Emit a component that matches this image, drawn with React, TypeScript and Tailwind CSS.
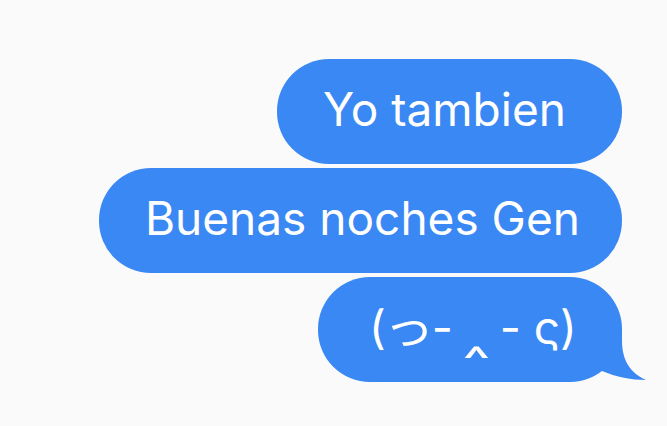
import React from "react";

type Msg = { text: React.ReactNode; id: string; width: string; pad: string; tail?: boolean };

const Kaomoji = () => (
  <>
    (<span className="inline-block scale-x-110">っ</span>-{" "}
    <span className="inline-block origin-[50%_83%] scale-x-[1.4] scale-y-[1.15]">‸</span> - ς)
  </>
);

const messages: Msg[] = [
  { id: "a", text: "Yo tambien", width: "w-[345px]", pad: "pl-[46px]" },
  { id: "b", text: "Buenas noches Gen", width: "w-[523px]", pad: "pl-[46px]" },
  { id: "c", text: <Kaomoji />, width: "w-[304px]", pad: "pl-[51px]", tail: true },
];

function Tail() {
  return (
    <svg
      className="absolute right-[-24px] bottom-0 w-[54px] h-[55px]"
      viewBox="0 0 54 55"
      aria-hidden="true"
    >
      <path d="M10 0 L30 0 L30 13 C30 28 34 44 54 53 C40 53 24 50 10 44 Z" fill="#3a88f4" />
    </svg>
  );
}

export default function App() {
  return (
    <div
      className="w-[667px] h-[426px] bg-[#fafafa] overflow-hidden"
      style={{ fontFamily: "Inter, 'Noto Sans', 'Noto Sans CJK JP', sans-serif" }}
    >
      <div className="flex flex-col items-end gap-[4px] pt-[59px] pr-[45px]">
        {messages.map((m) => (
          <div
            key={m.id}
            className={`relative flex items-center h-[105px] pb-[6px] rounded-[52px] bg-[#3a88f4] text-white text-[46px] leading-none ${m.width} ${m.pad}`}
          >
            <span className="whitespace-nowrap">{m.text}</span>
            {m.tail && <Tail />}
          </div>
        ))}
      </div>
    </div>
  );
}
